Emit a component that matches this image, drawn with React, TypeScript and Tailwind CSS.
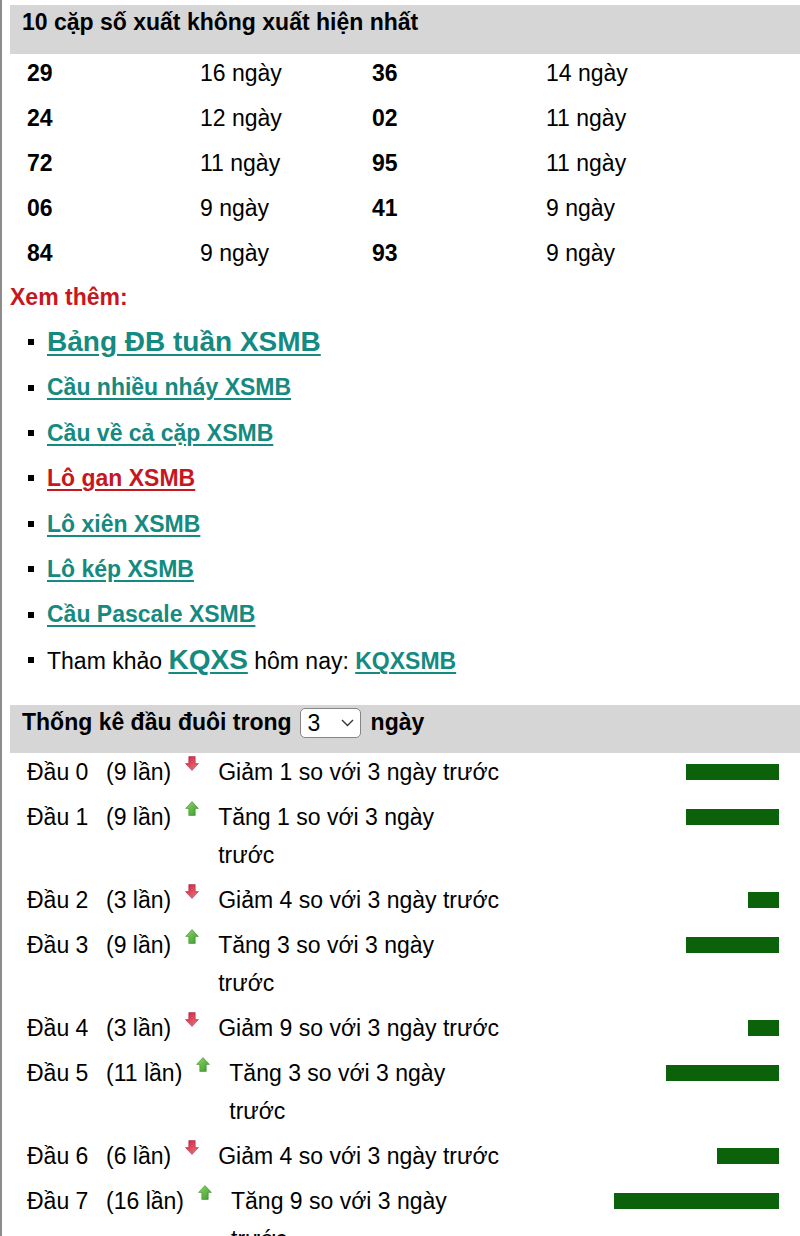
const pairs = [
  ['29', '16 ngày', '36', '14 ngày'],
  ['24', '12 ngày', '02', '11 ngày'],
  ['72', '11 ngày', '95', '11 ngày'],
  ['06', '9 ngày', '41', '9 ngày'],
  ['84', '9 ngày', '93', '9 ngày'],
]

const links = [
  { text: 'Cầu nhiều nháy XSMB', red: false },
  { text: 'Cầu về cả cặp XSMB', red: false },
  { text: 'Lô gan XSMB', red: true },
  { text: 'Lô xiên XSMB', red: false },
  { text: 'Lô kép XSMB', red: false },
  { text: 'Cầu Pascale XSMB', red: false },
]

const heads = [
  { n: 0, count: 9, up: false, lines: ['Giảm 1 so với 3 ngày trước'] },
  { n: 1, count: 9, up: true, lines: ['Tăng 1 so với 3 ngày', 'trước'] },
  { n: 2, count: 3, up: false, lines: ['Giảm 4 so với 3 ngày trước'] },
  { n: 3, count: 9, up: true, lines: ['Tăng 3 so với 3 ngày', 'trước'] },
  { n: 4, count: 3, up: false, lines: ['Giảm 9 so với 3 ngày trước'] },
  { n: 5, count: 11, up: true, lines: ['Tăng 3 so với 3 ngày', 'trước'] },
  { n: 6, count: 6, up: false, lines: ['Giảm 4 so với 3 ngày trước'] },
  { n: 7, count: 16, up: true, lines: ['Tăng 9 so với 3 ngày', 'trước'] },
]

function Arrow({ up }: { up: boolean }) {
  const id = up ? 'gUp' : 'gDown'
  return (
    <svg width="14" height="15" viewBox="0 0 14 15" className={up ? '' : 'rotate-180'}>
      <defs>
        <linearGradient id={id} x1="0" y1="0" x2="1" y2="1">
          <stop offset="0" stopColor={up ? '#8fd66a' : '#f0788a'} />
          <stop offset="1" stopColor={up ? '#3c9a2a' : '#c8233c'} />
        </linearGradient>
      </defs>
      <path
        d="M7 0.6 L13.4 7.4 H10.2 V14.4 H3.8 V7.4 H0.6 Z"
        fill={`url(#${id})`}
        stroke={up ? '#3a8a28' : '#b3203a'}
        strokeWidth="0.6"
        strokeLinejoin="round"
      />
    </svg>
  )
}

export default function App() {
  return (
    <div className="min-h-screen bg-white border-l-2 border-l-[#8c8c8c] font-['Liberation_Sans',Arial,sans-serif] text-[23px] text-black pt-[5px]">

      {/*=================================*/}
      {/*CẶP SỐ KHÔNG XUẤT HIỆN*/}
      {/*=================================*/}
      <div className="ml-[8px] h-[49px] bg-[#d7d6d7] pl-[12px] font-bold leading-[34px]">
        10 cặp số xuất không xuất hiện nhất
      </div>

      <div className="pl-[25px]">
        {pairs.map((row, i) => (
          <div key={i} className="grid grid-cols-[173px_172px_174px_1fr] h-[45px] leading-[38px]">
            <span className="font-bold">{row[0]}</span>
            <span>{row[1]}</span>
            <span className="font-bold">{row[2]}</span>
            <span>{row[3]}</span>
          </div>
        ))}
      </div>

      {/*=================================*/}
      {/*XEM THÊM*/}
      {/*=================================*/}
      <div className="mt-[3px] pl-[8px] leading-[30px] font-bold text-[#c8161e]">Xem thêm:</div>

      <ul className="mt-[7px]">
        <li className="flex items-center h-[46px]">
          <span className="ml-[26px] mr-[13px] w-[6px] h-[6px] bg-black shrink-0"></span>
          <a href="#" className="text-[28px] font-bold text-[#158a80] underline underline-offset-[3px]">Bảng ĐB tuần XSMB</a>
        </li>
        {links.map(link => (
          <li key={link.text} className="flex items-center h-[45.4px]">
            <span className="ml-[26px] mr-[13px] w-[6px] h-[6px] bg-black shrink-0"></span>
            <a
              href="#"
              className={link.red
                ? 'font-bold text-[#c8161e] underline underline-offset-[3px]'
                : 'font-bold text-[#158a80] underline underline-offset-[3px]'}
            >
              {link.text}
            </a>
          </li>
        ))}
        <li className="flex items-center h-[46px]">
          <span className="ml-[26px] mr-[13px] w-[6px] h-[6px] bg-black shrink-0"></span>
          <span className="whitespace-pre">
            Tham khảo{' '}
            <a href="#" className="text-[28px] font-bold text-[#158a80] underline underline-offset-[3px]">KQXS</a>
            {' '}hôm nay:{' '}
            <a href="#" className="font-bold text-[#158a80] underline underline-offset-[3px]">KQXSMB</a>
          </span>
        </li>
      </ul>

      {/*=================================*/}
      {/*THỐNG KÊ ĐẦU ĐUÔI*/}
      {/*=================================*/}
      <div className="mt-[22px] ml-[8px] h-[48px] bg-[#d7d6d7] pl-[12px] flex items-start font-bold leading-[34px]">
        <span>Thống kê đầu đuôi trong</span>
        <div className="ml-[8px] mt-[3px] w-[61px] h-[30px] bg-white border border-[#858585] rounded-[5px] flex items-center justify-between pl-[7px] pr-[6px] font-normal leading-none">
          <span>3</span>
          <svg width="13" height="8" viewBox="0 0 13 8">
            <path d="M1 1 L6.5 6.5 L12 1" fill="none" stroke="#333" strokeWidth="1.4" />
          </svg>
        </div>
        <span className="ml-[10px]">ngày</span>
      </div>

      <div className="pl-[25px] pr-[21px]">
        {heads.map(h => (
          <div key={h.n} className="flex justify-between items-start leading-[38px] pb-[7px]">
            <div className="flex items-start">
              <span className="w-[79px] shrink-0">Đầu {h.n}</span>
              <span className="mr-[14px]">({h.count} lần)</span>
              <span className="mt-[3px] w-[14px] shrink-0 flex">
                <Arrow up={h.up} />
              </span>
              <div className="ml-[19px] whitespace-nowrap">
                {h.lines.map(line => (
                  <div key={line}>{line}</div>
                ))}
              </div>
            </div>
            <div
              className="mt-[11px] h-[16px] bg-[#0b620b] shrink-0"
              style={{ width: Math.round(h.count * 10.3) }}
            ></div>
          </div>
        ))}
      </div>
    </div>
  )
}
